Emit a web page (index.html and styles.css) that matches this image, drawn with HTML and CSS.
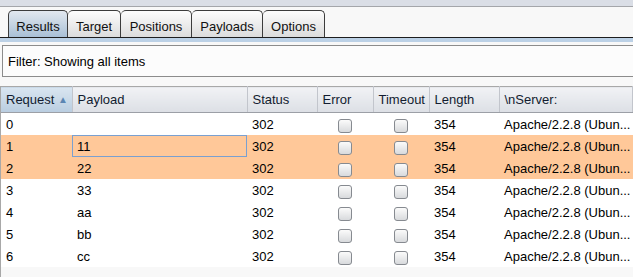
FILE: index.html
```html
<!DOCTYPE html>
<html lang="en">
<head>
    <meta charset="UTF-8">
    <title>Intruder attack</title>
    <link rel="stylesheet" href="styles.css">
</head>
<body>

    <div class="topbar"></div>

    <nav class="tabs">
        <button class="tab active" style="width: 60px">Results</button>
        <button class="tab" style="width: 53px">Target</button>
        <button class="tab" style="width: 71px">Positions</button>
        <button class="tab" style="width: 71px">Payloads</button>
        <button class="tab" style="width: 62px">Options</button>
    </nav>
    <div class="tab-rule"></div>

    <div class="filter">Filter: Showing all items</div>

    <div class="results">
        <table id="results-table">
            <colgroup>
                <col style="width: 71px"><col style="width: 175px"><col style="width: 70px">
                <col style="width: 56px"><col style="width: 56px"><col style="width: 70px"><col>
            </colgroup>
            <thead>
                <tr>
                    <th class="sorted">Request <span class="arrow">&#9650;</span></th>
                    <th>Payload</th><th>Status</th><th>Error</th><th>Timeout</th><th>Length</th><th>\nServer:</th>
                </tr>
            </thead>
            <tbody></tbody>
        </table>
    </div>

    <script>
        const rows = [
            { req: 0, payload: '', hl: false },
            { req: 1, payload: '11', hl: true, focus: true },
            { req: 2, payload: '22', hl: true },
            { req: 3, payload: '33', hl: false },
            { req: 4, payload: 'aa', hl: false },
            { req: 5, payload: 'bb', hl: false },
            { req: 6, payload: 'cc', hl: false }
        ];

        const tbody = document.querySelector('#results-table tbody');
        rows.forEach(r => {
            const tr = document.createElement('tr');
            if (r.hl) tr.className = 'highlight';
            tr.innerHTML = `
                <td>${r.req}</td>
                <td class="${r.focus ? 'focus' : ''}">${r.payload}</td>
                <td>302</td>
                <td class="check"><span class="box"></span></td>
                <td class="check"><span class="box"></span></td>
                <td>354</td>
                <td>Apache/2.2.8 (Ubun...</td>
            `;
            tbody.appendChild(tr);
        });
    </script>

</body>
</html>
```

FILE: styles.css
```css
body { margin: 0; width: 633px; height: 277px; overflow: hidden; background: #f8f8f8; font-family: "Liberation Sans", Arial, sans-serif; font-size: 13px; color: #000; }
.topbar { height: 6px; background: #dadee6; border-bottom: 1px solid #a4a6aa; }
.tabs { display: flex; padding: 3px 0 0 8px; height: 27px; }
.tab { box-sizing: border-box; height: 27px; margin: 0; padding: 4px 0 0; font: inherit; color: #111; text-align: center; border: 1px solid #3c3c3c; border-left: none; border-bottom: none; border-radius: 5px 5px 0 0; background: linear-gradient(#fdfdfd, #dcdcdc); }
.tab.active { border-left: 1px solid #3c3c3c; background: linear-gradient(#e2e8ef, #a9c0d6); }
.tab-rule { height: 4px; border-top: 1px solid #1e1e1e; background: #bcd1e6; }
.filter { box-sizing: border-box; height: 32px; margin: 3px 0 0 2px; padding: 8px 5px; background: #fcfcfc; border: 1px solid #8c8c8c; border-right: none; }
.results { margin-top: 9px; border-left: 1px solid #a8a8a8; height: 191px; }
table { width: 632px; border-collapse: collapse; table-layout: fixed; }
th { box-sizing: border-box; height: 26px; padding: 0 0 0 5px; text-align: left; font-weight: normal; color: #121c30; white-space: nowrap; background: linear-gradient(#f1f2f5, #dcdfe5); border-top: 1px solid #a8a8a8; border-right: 1px solid #c2c5cc; border-bottom: 1px solid #9c9fa6; }
th.sorted { background: linear-gradient(#d9e5f0, #b9cde0); }
.arrow { font-size: 10px; color: #5b86b3; vertical-align: 1px; }
td { height: 22px; padding: 0 0 0 5px; background: #fff; white-space: nowrap; overflow: hidden; }
tr.highlight td { background: #ffc899; }
td.focus { box-shadow: inset 0 0 0 1px #7aa0d0; }
td.check { padding: 0; text-align: center; }
.box { display: inline-block; width: 14px; height: 14px; box-sizing: border-box; margin-top: 4px; border: 1px solid #868a90; border-radius: 3px; background: linear-gradient(#fbfbfb, #d8dadd); vertical-align: top; }
```
